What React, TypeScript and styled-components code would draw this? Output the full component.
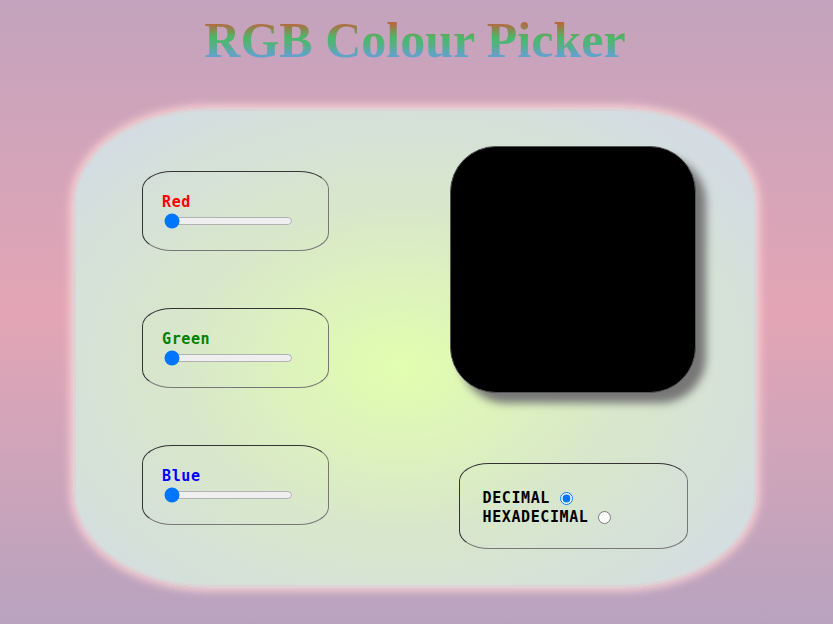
import React, {useState} from 'react';
import styled, {createGlobalStyle} from 'styled-components';

const GlobalStyle = createGlobalStyle`
    html, body {
        margin: 0;
        padding: 0;
    }
    body {
        min-height: 100vh;
        background: linear-gradient(to bottom, #c3a3bd 0%, #e3a5b5 50%, #b8a3bf 100%);
        font-family: "Liberation Sans", Arial, sans-serif;
    }
`;

const Page = styled.div`
    display: flex;
    flex-direction: column;
    align-items: center;
    height: 624px;
    box-sizing: border-box;
    padding: 12px 3px 0 0;
`;

const Title = styled.h1`
    margin: 0;
    font-family: "Liberation Serif", "Times New Roman", serif;
    font-size: 50px;
    font-weight: bold;
    line-height: 57px;
    background: linear-gradient(to bottom, #b8683e 20%, #4ab86a 45%, #52b37a 55%, #62a2c8 75%);
    -webkit-background-clip: text;
    background-clip: text;
    color: transparent;
`;

const Card = styled.div`
    margin-top: 39px;
    width: 684px;
    height: 480px;
    box-sizing: border-box;
    border: 3px solid #ddd3d6;
    border-radius: 20%;
    box-shadow: 0 0 8px 3px #f7d2d4;
    background: radial-gradient(ellipse at 48% 54%, #e2feae 0%, #d8e7cb 45%, #d2d8ea 100%);
    display: flex;
    gap: 121px;
    padding: 0 58px 0 66px;
`;

const SliderColumn = styled.div`
    display: flex;
    flex-direction: column;
    justify-content: center;
    gap: 57px;
`;

const Panel = styled.div`
    box-sizing: border-box;
    border: 1px solid;
    border-color: #333 #777 #777 #333;
    border-radius: 30px / 18px;
`;

const SliderPanel = styled(Panel)`
    width: 187px;
    height: 80px;
    display: flex;
    flex-direction: column;
    justify-content: center;
    padding-left: 19px;
`;

const SliderLabel = styled.label<{$color: string}>`
    font-family: "DejaVu Sans Mono", "Liberation Mono", monospace;
    font-weight: bold;
    font-size: 15px;
    line-height: 18px;
    letter-spacing: 0.6px;
    color: ${(p) => p.$color};
`;

const Range = styled.input`
    width: 129px;
    margin: 2px 0 0 2px;
`;

const RightColumn = styled.div`
    display: flex;
    flex-direction: column;
    align-items: center;
    padding-top: 35px;
    gap: 70px;
`;

const Swatch = styled.div`
    width: 246px;
    height: 247px;
    box-sizing: border-box;
    border: 1px solid #555;
    border-radius: 46px;
    box-shadow: 10px 10px 9px #777;
`;

const ModePanel = styled(Panel)`
    width: 229px;
    height: 86px;
    display: flex;
    flex-direction: column;
    justify-content: center;
    padding: 3px 0 0 23px;
`;

const ModeRow = styled.label`
    display: flex;
    align-items: center;
    font-family: "DejaVu Sans Mono", "Liberation Mono", monospace;
    font-weight: bold;
    font-size: 15px;
    line-height: 19px;
    letter-spacing: 0.6px;
    color: #000;
    input {
        margin: 0 0 0 10px;
        width: 13px;
        height: 13px;
    }
`;

export default function App() {
    const [red, setRed] = useState(0);
    const [green, setGreen] = useState(0);
    const [blue, setBlue] = useState(0);
    const [mode, setMode] = useState('decimal');

    return (
        <Page>
            <GlobalStyle />
            <Title>RGB Colour Picker</Title>
            <Card>
                <SliderColumn>
                    <SliderPanel>
                        <SliderLabel $color='red'>Red</SliderLabel>
                        <Range type='range' min={0} max={255} value={red}
                            onChange={(e) => setRed(Number(e.target.value))} />
                    </SliderPanel>
                    <SliderPanel>
                        <SliderLabel $color='green'>Green</SliderLabel>
                        <Range type='range' min={0} max={255} value={green}
                            onChange={(e) => setGreen(Number(e.target.value))} />
                    </SliderPanel>
                    <SliderPanel>
                        <SliderLabel $color='blue'>Blue</SliderLabel>
                        <Range type='range' min={0} max={255} value={blue}
                            onChange={(e) => setBlue(Number(e.target.value))} />
                    </SliderPanel>
                </SliderColumn>
                <RightColumn>
                    <Swatch style={{backgroundColor: `rgb(${red}, ${green}, ${blue})`}} />
                    <ModePanel>
                        <ModeRow>
                            DECIMAL
                            <input type='radio' name='mode' checked={mode === 'decimal'}
                                onChange={() => setMode('decimal')} />
                        </ModeRow>
                        <ModeRow>
                            HEXADECIMAL
                            <input type='radio' name='mode' checked={mode === 'hex'}
                                onChange={() => setMode('hex')} />
                        </ModeRow>
                    </ModePanel>
                </RightColumn>
            </Card>
        </Page>
    );
}
